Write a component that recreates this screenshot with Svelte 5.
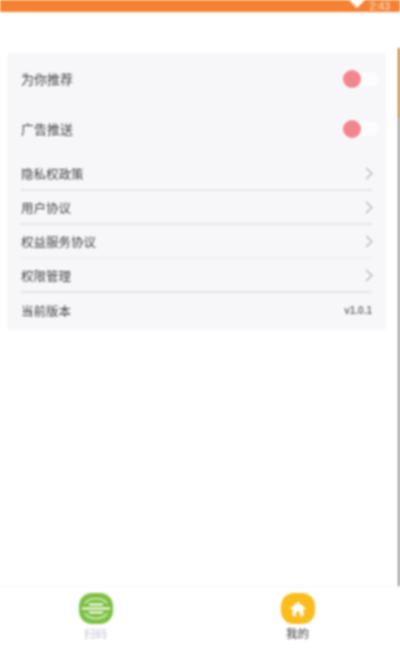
<script lang="ts">
  const toggles = ['为你推荐', '广告推送'];
  const links = ['隐私权政策', '用户协议', '权益服务协议', '权限管理'];
</script>

<div class="page">
  <header class="status">
    <svg class="wifi" viewBox="0 0 16 8" aria-hidden="true"><path d="M0 0h16L8 8z" fill="#fff" /></svg>
    <span class="time">2:43</span>
  </header>

  <main class="content">
    <section class="card">
      {#each toggles as label}
        <div class="toggle-row">
          <span class="label big">{label}</span>
          <span class="switch"><span class="knob"></span></span>
        </div>
      {/each}

      <div class="list">
        {#each links as label}
          <div class="link-row">
            <span class="label">{label}</span>
            <svg class="chevron" viewBox="0 0 8 14" aria-hidden="true">
              <path d="M1 1l6 6-6 6" fill="none" stroke="#b4b4b8" stroke-width="1.4" />
            </svg>
          </div>
        {/each}
        <div class="link-row last">
          <span class="label">当前版本</span>
          <span class="version">v1.0.1</span>
        </div>
      </div>
    </section>
  </main>

  <nav class="tabbar">
    <div class="tab">
      <span class="tab-icon green">
        <svg viewBox="0 0 34 31" aria-hidden="true">
          <path d="M6 10.500c2.500-4 6.500-5 11-5s8.500 1 11 5M6 20.500c2.500 4 6.500 5 11 5s8.500-1 11-5" fill="none" stroke="#d6edc0" stroke-width="1.600" />
          <path d="M10 11.500h14M3 15.500h28M10 19.500h14" stroke="#fff" stroke-width="2" />
        </svg>
      </span>
      <span class="tab-text">扫码</span>
    </div>
    <div class="tab">
      <span class="tab-icon yellow">
        <svg viewBox="0 0 24 24" aria-hidden="true">
          <path d="M12 4L3 12h3v8h4v-5h4v5h4v-8h3z" fill="#fff" />
        </svg>
      </span>
      <span class="tab-text active">我的</span>
    </div>
  </nav>

  <!-- sliver of the next screen along the right edge -->
  <div class="edge"></div>
</div>

<style>
  :global(body) {
    margin: 0;
    background: #fff;
  }

  .page {
    position: relative;
    width: 400px;
    height: 648px;
    display: flex;
    flex-direction: column;
    overflow: hidden;
    background: #fff;
    font-family: "Noto Sans CJK SC", "Liberation Sans", sans-serif;
    filter: blur(0.8px);
  }

  .status {
    height: 12px;
    flex: none;
    display: flex;
    justify-content: flex-end;
    align-items: flex-start;
    gap: 5px;
    padding-right: 10px;
    background: #f58233;
  }

  .wifi {
    width: 16px;
    height: 8px;
  }

  .time {
    font-family: "Liberation Sans", sans-serif;
    font-size: 10.500px;
    line-height: 12px;
    color: #f8e3d2;
  }

  .content {
    flex: 1;
    padding: 41px 14px 0 7px;
  }

  .card {
    height: 277px;
    box-sizing: border-box;
    padding: 1px 14px 0;
    background: #f7f7f9;
    border-radius: 3px;
  }

  .toggle-row {
    height: 50px;
    display: flex;
    align-items: center;
    justify-content: space-between;
  }

  .label {
    font-size: 12.500px;
    color: #444448;
  }

  .label.big {
    font-size: 13px;
    padding-bottom: 2px;
  }

  .switch {
    width: 36px;
    height: 14px;
    margin-right: -7px;
    border-radius: 7px;
    display: flex;
    align-items: center;
    background: #fcfcfd;
  }

  .knob {
    width: 18px;
    height: 18px;
    flex: none;
    border-radius: 50%;
    background: #f5858d;
  }

  .list {
    margin-top: 3px;
  }

  .link-row {
    height: 34px;
    display: flex;
    align-items: center;
    justify-content: space-between;
    border-bottom: 2px solid #e4e4e6;
    box-sizing: border-box;
  }

  .link-row:nth-child(3) {
    border-bottom-color: #f0f0f2;
  }

  .link-row.last {
    border-bottom: 0;
  }

  .chevron {
    width: 8px;
    height: 13px;
    margin-right: -1px;
  }

  .version {
    font-family: "Liberation Sans", sans-serif;
    font-size: 10px;
    font-weight: 700;
    color: #77777b;
  }

  .tabbar {
    height: 62px;
    flex: none;
    display: flex;
    box-sizing: border-box;
    padding-top: 6px;
    border-top: 1px solid #f6f6f6;
  }

  .tab {
    flex: 1;
    display: flex;
    flex-direction: column;
    align-items: center;
    gap: 3px;
  }

  .tab:first-child {
    margin-left: -4.500px;
    margin-right: 4.500px;
  }

  .tab:last-child {
    margin-left: -2.500px;
    margin-right: 2.500px;
  }

  .tab-icon {
    width: 34px;
    height: 31px;
    border-radius: 13px;
    display: flex;
    align-items: center;
    justify-content: center;
  }

  .tab-icon svg {
    width: 100%;
    height: 100%;
  }

  .tab-icon.yellow svg {
    width: 22px;
    height: 22px;
  }

  .green {
    background: #7cc142;
  }

  .yellow {
    background: #fbbc1c;
  }

  .tab-text {
    font-size: 11.500px;
    line-height: 12px;
    color: #c4c4d6;
  }

  .tab-text.active {
    color: #3a3a3a;
  }

  .edge {
    position: absolute;
    top: 48px;
    right: 0;
    width: 2px;
    height: 538px;
    background: linear-gradient(#b8701f 0 70px, #8c8c8c 70px);
  }
</style>
